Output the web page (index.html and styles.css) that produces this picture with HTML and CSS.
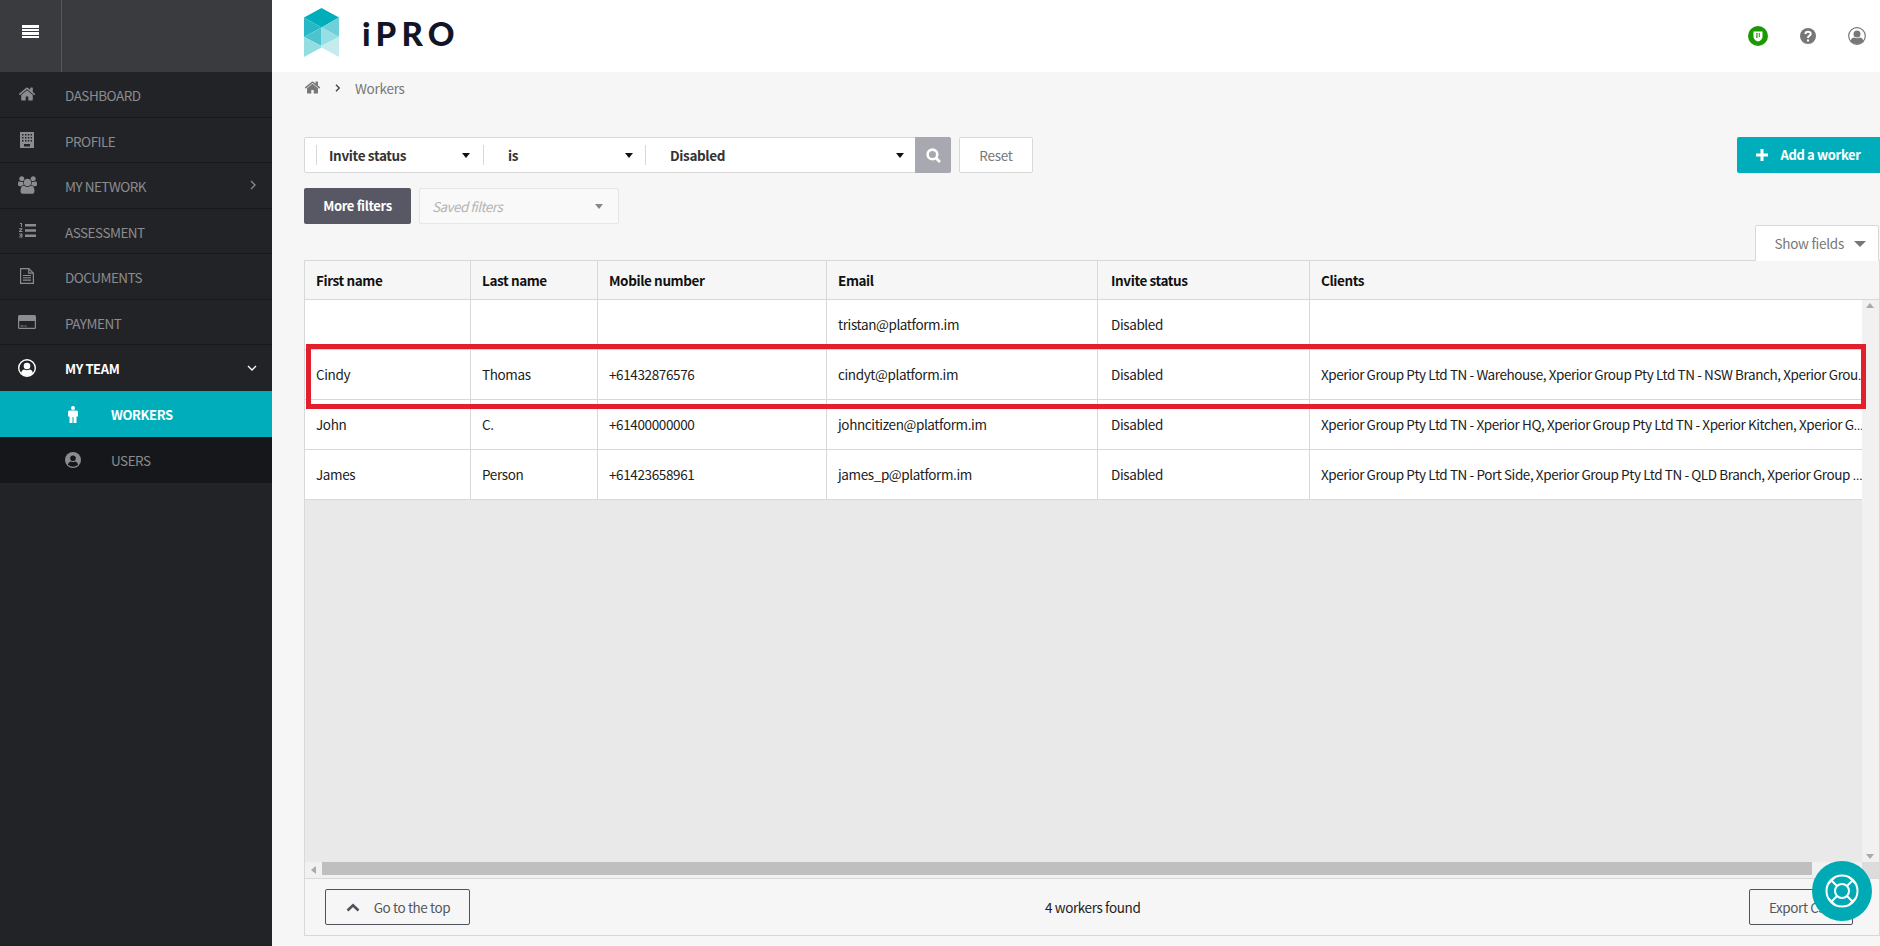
FILE: index.html
```html
<!DOCTYPE html>
<html lang="en">
<head>
<meta charset="utf-8">
<title>iPRO - Workers</title>
<link rel="stylesheet" href="styles.css">
</head>
<body>
<div class="app">
  <aside class="sidebar">
    <div class="side-head">
      <div class="burger"><span></span><span></span><span></span><span></span></div>
    </div>
    <nav class="nav">
      <a class="nav-item"><span class="nav-icon"><svg width="18" height="18" viewBox="0 0 1792 1792"><path fill="currentColor" d="M1472 992v480q0 26-19 45t-45 19h-384v-384h-256v384h-384q-26 0-45-19t-19-45v-480q0-1 .5-3t.5-3l575-474 575 474q1 2 1 6zm223-69l-62 74q-8 9-21 11h-3q-13 0-21-7l-692-577-692 577q-12 8-24 7-13-2-21-11l-62-74q-8-10-7-23.5t11-21.5l719-599q32-26 76-26t76 26l244 204v-195q0-14 9-23t23-9h192q14 0 23 9t9 23v408l219 182q10 8 11 21.5t-7 23.5z"/></svg></span><span class="nav-label">DASHBOARD</span></a>
      <a class="nav-item"><span class="nav-icon"><svg width="14" height="16" viewBox="0 0 14 16"><path fill="currentColor" fill-rule="evenodd" d="M0 0h14v16H0zM2 2v1.500h1.500V2zm3 0v1.500h1.500V2zm2.800 0v1.500h1.500V2zm2.800 0v1.500H12V2zM2 5v1.500h1.500V5zm3 0v1.500h1.500V5zm2.800 0v1.500h1.500V5zm2.800 0v1.500H12V5zM2 8v1.500h1.500V8zm3 0v1.500h1.500V8zm2.800 0v1.500h1.500V8zm2.800 0v1.500H12V8zM4 12v2.500h6V12z"/></svg></span><span class="nav-label">PROFILE</span></a>
      <a class="nav-item"><span class="nav-icon"><svg width="19" height="18" viewBox="0 0 1920 1792"><path fill="currentColor" d="M593 896q-162 5-265 128h-134q-82 0-138-40.500t-56-118.500q0-353 124-353 6 0 43.500 21t97.500 42.500 119 21.500q67 0 133-23-5 37-5 66 0 139 81 256zm1071 637q0 120-73 189.500t-194 69.500h-874q-121 0-194-69.500t-73-189.500q0-53 3.500-103.500t14-109 26.500-108.500 43-97.500 62-81 85.500-53.500 111.500-20q10 0 43 21.500t73 48 107 48 135 21.500 135-21.500 107-48 73-48 43-21.500q61 0 111.500 20t85.500 53.500 62 81 43 97.500 26.500 108.500 14 109 3.500 103.500zm-1024-1277q0 106-75 181t-181 75-181-75-75-181 75-181 181-75 181 75 75 181zm704 384q0 159-112.500 271.500t-271.500 112.500-271.500-112.500-112.500-271.500 112.500-271.500 271.500-112.500 271.500 112.500 112.500 271.500zm576 225q0 78-56 118.500t-138 40.500h-134q-103-123-265-128 81-117 81-256 0-29-5-66 66 23 133 23 59 0 119-21.500t97.500-42.500 43.500-21q124 0 124 353zm-128-609q0 106-75 181t-181 75-181-75-75-181 75-181 181-75 181 75 75 181z"/></svg></span><span class="nav-label">MY NETWORK</span><svg class="nav-caret" width="8" height="10" viewBox="0 0 8 10"><path d="M2 1l4 4-4 4" fill="none" stroke="currentColor" stroke-width="1.300"/></svg></a>
      <a class="nav-item"><span class="nav-icon"><svg width="17" height="15" viewBox="0 0 17 15"><path fill="currentColor" d="M6 1h11v2.500H6zM6 6.300h11v2.500H6zM6 11.500h11V14H6zM1 0h2v4H2V1H1zM0 5.300h3.500v1L1.500 8H3.500v1H0V8l2-1.700H0zM0 10.500h3.500v4H0v-1h2.500v-.5H1v-1h1.500v-.5H0z"/></svg></span><span class="nav-label">ASSESSMENT</span></a>
      <a class="nav-item"><span class="nav-icon"><svg width="14" height="16" viewBox="0 0 14 16"><path fill="none" stroke="currentColor" stroke-width="1.200" d="M.6.600h8.200l4.600 4.600v10.200H.6zM8.800.600v4.600h4.600"/><path stroke="currentColor" stroke-width="1.100" d="M3 7.500h8M3 9.800h8M3 12.100h8"/></svg></span><span class="nav-label">DOCUMENTS</span></a>
      <a class="nav-item"><span class="nav-icon"><svg width="18" height="14" viewBox="0 0 18 14"><path fill="currentColor" fill-rule="evenodd" d="M1.500 0h15A1.500 1.500 0 0 1 18 1.500v11a1.500 1.500 0 0 1-1.500 1.500h-15A1.500 1.500 0 0 1 0 12.500v-11A1.500 1.500 0 0 1 1.500 0zM1.200 6v6.500q0 .3.300.3h15q.3 0 .3-.3V6zM2.500 10.500h3v1h-3zM6.500 10.500h2v1h-2z"/></svg></span><span class="nav-label">PAYMENT</span></a>
      <a class="nav-item nav-open"><span class="nav-icon"><svg width="18" height="18" viewBox="0 0 18 18"><circle cx="9" cy="9" r="8.300" fill="none" stroke="currentColor" stroke-width="1.400"/><circle cx="9" cy="7" r="3.300" fill="currentColor"/><path fill="currentColor" d="M3 14.500q.5-3.500 3-4 3 1.600 6 0 2.500.5 3 4-6 5-12 0z"/></svg></span><span class="nav-label">MY TEAM</span><svg class="nav-caret" width="10" height="8" viewBox="0 0 10 8"><path d="M1 2l4 4 4-4" fill="none" stroke="currentColor" stroke-width="1.300"/></svg></a>
      <a class="sub-item sub-active"><span class="sub-icon"><svg width="10" height="17" viewBox="0 0 10 17"><circle cx="5" cy="2" r="2" fill="currentColor"/><path fill="currentColor" d="M1.500 4.500h7Q10 4.500 10 6v4.500H8.500V17h-3v-6h-1v6h-3v-6.500H0V6q0-1.500 1.500-1.500z"/></svg></span><span class="sub-label">WORKERS</span></a>
      <a class="sub-item"><span class="sub-icon"><svg width="16" height="16" viewBox="0 0 16 16"><circle cx="8" cy="8" r="8" fill="currentColor"/><circle cx="8" cy="6.300" r="2.800" fill="#16171a"/><path fill="#16171a" d="M2.800 12.700q.7-3 3-3.300 2.200 1.200 4.400 0 2.300.3 3 3.300-5.200 4-10.400 0z"/></svg></span><span class="sub-label">USERS</span></a>
    </nav>
  </aside>

  <main class="main">
    <header class="topbar">
      <div class="logo">
        <svg width="36" height="50" viewBox="0 0 36 50">
          <path fill="#00aebb" d="M17.500 0 35 9.500 17.500 19.500 0 9.500z"/>
          <path fill="#27b8c5" d="M0 9.500 17.500 19.500 0 29z"/>
          <path fill="#6ed1da" d="M35 9.500 17.500 19.500 35 29z"/>
          <path fill="#4cc4cf" d="M0 29 17.500 19.500V38z"/>
          <path fill="#96dfe5" d="M35 29 17.500 19.500V38z"/>
          <path fill="#93dde3" d="M0 29 17.500 38V39.500L0 49z"/>
          <path fill="#c4ecef" d="M35 29 17.500 38V39.500L35 49z"/>
        </svg>
        <span class="logo-text">iPRO</span>
      </div>
      <div class="top-icons">
        <svg width="20" height="20" viewBox="0 0 20 20"><circle cx="10" cy="10" r="10" fill="#1a9a00"/><path fill="#fff" d="M5.500 5.500h9v5q0 3.500-4.500 5-4.500-1.500-4.500-5z"/><path fill="#1a9a00" d="M8.300 7h1.200v5H8.300zM10.800 7h1v4h-1z"/></svg>
        <svg width="16" height="16" viewBox="0 0 16 16"><circle cx="8" cy="8" r="8" fill="#777"/><path fill="none" stroke="#fff" stroke-width="2" d="M5.300 6q.3-2.300 2.700-2.300t2.700 2q0 1.300-1.500 2.200-1.200.7-1.200 2"/><path fill="#fff" d="M7 11.500h2v2H7z"/></svg>
        <svg width="18" height="18" viewBox="0 0 18 18"><circle cx="9" cy="9" r="8.300" fill="none" stroke="#777" stroke-width="1.200"/><circle cx="9" cy="7" r="3.500" fill="#777"/><path fill="#777" d="M2.500 14.500q.5-3.500 3.300-4 3.200 1.600 6.400 0 2.800.5 3.300 4-6.500 5-13 0z"/></svg>
      </div>
    </header>

    <div class="content">
      <div class="crumbs">
        <svg class="crumb-home" width="17" height="17" viewBox="0 0 1792 1792"><path fill="currentColor" d="M1472 992v480q0 26-19 45t-45 19h-384v-384h-256v384h-384q-26 0-45-19t-19-45v-480q0-1 .5-3t.5-3l575-474 575 474q1 2 1 6zm223-69l-62 74q-8 9-21 11h-3q-13 0-21-7l-692-577-692 577q-12 8-24 7-13-2-21-11l-62-74q-8-10-7-23.500t11-21.500l719-599q32-26 76-26t76 26l244 204v-195q0-14 9-23t23-9h192q14 0 23 9t9 23v408l219 182q10 8 11 21.500t-7 23.500z"/></svg>
        <svg class="crumb-sep" width="6" height="8" viewBox="0 0 6 8"><path d="M1 .8 4.200 4 1 7.200" fill="none" stroke="#444" stroke-width="1.400"/></svg>
        <span>Workers</span>
      </div>

      <div class="filter-row">
        <div class="filter-left">
          <div class="filter-bar">
            <div class="filter-field f-a"><span>Invite status</span><i class="tri"></i></div>
            <div class="filter-field f-b"><span>is</span><i class="tri"></i></div>
            <div class="filter-field f-c"><span>Disabled</span><i class="tri"></i></div>
            <button class="search-btn"><svg width="15" height="15" viewBox="0 0 14 14"><circle cx="6" cy="6" r="4.500" fill="none" stroke="#fff" stroke-width="2.400"/><path d="M9.300 9.300 13 13" stroke="#fff" stroke-width="2.600"/></svg></button>
          </div>
          <button class="reset-btn">Reset</button>
        </div>
        <button class="add-btn"><svg width="12" height="12" viewBox="0 0 12 12"><path fill="#fff" d="M4.500 0h3v4.500H12v3H7.500V12h-3V7.500H0v-3h4.500z"/></svg>Add a worker</button>
      </div>

      <div class="filter-row2">
        <button class="more-btn">More filters</button>
        <div class="saved"><em>Saved filters</em><i class="tri tri-grey"></i></div>
      </div>

      <div class="fields-row">
        <button class="fields-btn"><span class="fields-label">Show fields</span><i class="tri tri-wide"></i></button>
      </div>

      <section class="table">
        <div class="row head">
          <div class="cell">First name</div>
          <div class="cell">Last name</div>
          <div class="cell">Mobile number</div>
          <div class="cell">Email</div>
          <div class="cell">Invite status</div>
          <div class="cell">Clients</div>
        </div>
        <div class="scroller">
          <div class="tbody">
            <div class="row">
              <div class="cell"></div><div class="cell"></div><div class="cell"></div>
              <div class="cell">tristan@platform.im</div><div class="cell">Disabled</div><div class="cell"></div>
            </div>
            <div class="row">
              <div class="cell">Cindy</div><div class="cell">Thomas</div><div class="cell">+61432876576</div>
              <div class="cell">cindyt@platform.im</div><div class="cell">Disabled</div>
              <div class="cell clip">Xperior Group Pty Ltd TN - Warehouse, Xperior Group Pty Ltd TN - NSW Branch, Xperior Grou<span class="ell">..</span></div>
            </div>
            <div class="row">
              <div class="cell">John</div><div class="cell">C.</div><div class="cell">+61400000000</div>
              <div class="cell">johncitizen@platform.im</div><div class="cell">Disabled</div>
              <div class="cell clip">Xperior Group Pty Ltd TN - Xperior HQ, Xperior Group Pty Ltd TN - Xperior Kitchen, Xperior G<span class="ell">...</span></div>
            </div>
            <div class="row">
              <div class="cell">James</div><div class="cell">Person</div><div class="cell">+61423658961</div>
              <div class="cell">james_p@platform.im</div><div class="cell">Disabled</div>
              <div class="cell clip">Xperior Group Pty Ltd TN - Port Side, Xperior Group Pty Ltd TN - QLD Branch, Xperior Group <span class="ell">...</span></div>
            </div>
          </div>
          <div class="vbar"><i class="arr arr-up"></i><i class="arr arr-down"></i></div>
          <div class="hbar"><i class="arr arr-left"></i><div class="thumb"></div></div>
          <div class="corner"></div>
          <div class="highlight"></div>
        </div>
        <footer class="tfoot">
          <button class="ghost top-btn"><svg width="14" height="9" viewBox="0 0 14 9"><path d="M1.500 7.500 7 2.200l5.500 5.300" fill="none" stroke="#50525c" stroke-width="2.600"/></svg>Go to the top</button>
          <span class="count">4 workers found</span>
          <button class="ghost export-btn">Export CSV</button>
        </footer>
      </section>
    </div>
  </main>
</div>
<button class="help"><svg width="38" height="38" viewBox="0 0 38 38" fill="none" stroke="#fff" stroke-width="2"><circle cx="19" cy="19" r="15.500"/><circle cx="19" cy="19" r="7"/><path d="M8 8l6 6M30 8l-6 6M8 30l6-6M30 30l-6-6M5 12l7 -7M26 5l7 7M5 26l7 7M33 26l-7 7"/></svg></button>
</body>
</html>
```
FILE: styles.css
```css
* { box-sizing: border-box; }
html, body { margin: 0; height: 946px; overflow: hidden; }
body {
  font-family: "Noto Sans CJK SC", "Noto Sans", sans-serif;
  font-size: 13.5px;
  letter-spacing: -0.25px;
  line-height: 20px;
  color: #1c1c22;
  background: #f6f6f6;
}
button { font: inherit; letter-spacing: inherit; cursor: pointer; padding: 0; }
.app { display: flex; height: 946px; }

.sidebar { width: 272px; flex: none; background: #222326; display: flex; flex-direction: column; }
.side-head { height: 72px; background: #3a3b3f; display: flex; align-items: center; }
.burger {
  width: 62px; height: 72px; border-right: 1px solid #56575b; padding-bottom: 9px;
  display: flex; flex-direction: column; justify-content: center; align-items: center; gap: 1px;
}
.burger span { display: block; width: 17px; height: 2.500px; background: #fff; }
.nav { display: flex; flex-direction: column; }
.nav-item {
  height: 45.500px; display: flex; align-items: center; color: #8b8c90;
  border-bottom: 1px solid #17181a; padding-right: 15px;
}
.nav-label { padding-top: 1.500px; letter-spacing: -0.5px; }
.nav-icon { width: 65px; flex: none; display: flex; justify-content: center; padding-right: 11px; }
.nav-caret { margin-left: auto; }
.nav-open { height: 46px; color: #fff; font-weight: 700; border-bottom: none; }
.nav-open .nav-label { font-size: 13px; letter-spacing: -0.4px; padding-top: 2px; }
.sub-item { height: 46px; display: flex; align-items: center; background: #16171a; color: #8b8c90; }
.sub-label { letter-spacing: -0.5px; }
.sub-active { background: #00aebb; color: #fff; font-weight: 700; }
.sub-active .sub-label { font-size: 13px; letter-spacing: -0.4px; padding-top: 2px; }
.sub-icon { width: 111px; flex: none; display: flex; justify-content: center; padding-left: 35px; }

.main { flex: 1; min-width: 0; display: flex; flex-direction: column; }
.topbar { height: 72px; flex: none; background: #fff; display: flex; align-items: center; justify-content: space-between; padding-left: 32px; }
.logo { display: flex; align-items: center; gap: 22px; padding-bottom: 6px; }
.logo-text {
  font-family: Lato, "Noto Sans", sans-serif; font-weight: 900; font-size: 33px; line-height: 40px;
  letter-spacing: 5.200px; color: #111527;
}
.top-icons { display: flex; align-items: center; gap: 32px; padding-right: 14px; }

.content { flex: 1; min-height: 0; display: flex; flex-direction: column; padding: 0 0 10px 32px; }
.crumbs { height: 65px; flex: none; display: flex; align-items: flex-start; padding-top: 6px; color: #777; }
.crumb-home { margin-top: 1px; margin-right: 14px; }
.crumb-sep { margin-top: 6px; margin-right: 14px; }

.filter-row { display: flex; justify-content: space-between; height: 36px; flex: none; }
.filter-left { display: flex; gap: 8px; }
.filter-bar { display: flex; width: 647px; height: 36px; background: #fff; border: 1px solid #d8d8d8; border-radius: 2px; align-items: center; font-weight: 700; letter-spacing: -0.35px; color: #333; }
.filter-field { height: 20px; display: flex; align-items: center; justify-content: space-between; border-left: 1px solid #d8d8d8; }
.f-a { margin-left: 11px; width: 167px; padding: 0 13px 0 12px; }
.f-b { width: 162px; padding: 0 12px 0 24px; }
.f-c { flex: 1; padding: 0 11px 0 24px; }
.tri { display: block; width: 0; height: 0; border-left: 4px solid transparent; border-right: 4px solid transparent; border-top: 5px solid #111; }
.tri-grey { border-top-color: #888; }
.tri-wide { border-left-width: 6px; border-right-width: 6px; border-top-width: 6px; border-top-color: #777; margin-left: 10px; }
.search-btn { width: 36px; height: 36px; margin: -1px -1px -1px 0; background: #a7a8b0; border: none; border-radius: 0 2px 2px 0; display: flex; align-items: center; justify-content: center; }
.reset-btn { width: 74px; background: #fff; border: 1px solid #d8d8d8; border-radius: 2px; color: #777; }
.add-btn { width: 143px; background: #00aebb; color: #fff; border: none; border-radius: 2px 0 0 2px; font-size: 13px; font-weight: 700; letter-spacing: -0.35px; display: flex; align-items: center; justify-content: center; gap: 12px; }

.filter-row2 { display: flex; gap: 8px; margin-top: 15px; height: 36px; flex: none; }
.more-btn { width: 107px; background: #575864; color: #fff; border: none; border-radius: 2px; font-size: 13px; font-weight: 700; letter-spacing: -0.35px; }
.saved { width: 200px; background: #f9f9f9; border: 1px solid #e6e6e6; border-radius: 2px; display: flex; align-items: center; justify-content: space-between; padding: 0 15px 0 12px; color: #b5b5b5; }
.saved em { font-style: italic; letter-spacing: -0.55px; }

.fields-row { display: flex; justify-content: flex-end; margin-top: 1px; padding-right: 1px; height: 36px; flex: none; margin-bottom: -1px; position: relative; }
.fields-btn { width: 124px; height: 36px; background: #fff; border: 1px solid #d8d8d8; border-bottom: none; border-radius: 2px 2px 0 0; color: #777; display: flex; align-items: center; justify-content: flex-end; padding-right: 12px; }
.fields-label { padding-bottom: 2px; }

.table { flex: 1; min-height: 0; display: flex; flex-direction: column; border: 1px solid #d8d8d8; }
.row { display: grid; grid-template-columns: 166px 127px 229px 271px 212px minmax(0, 1fr); height: 50px; background: #fff; border-bottom: 1px solid #d8d8d8; letter-spacing: -0.38px; }
.row.head { height: 39px; flex: none; background: #f6f6f6; font-weight: 700; letter-spacing: -0.4px; }
.cell { display: flex; align-items: center; padding: 0 0 1px 11px; border-right: 1px solid #d8d8d8; color: #1c1c22; }
.cell:nth-child(5) { padding-left: 13px; }
.head .cell { color: #111; padding-bottom: 0; }
.cell:last-child { border-right: none; }
.clip { display: block; line-height: 49px; white-space: nowrap; overflow: hidden; letter-spacing: -0.42px; }
.ell { font-family: "Liberation Sans", sans-serif; letter-spacing: -0.5px; }

.scroller { flex: 1; min-height: 0; position: relative; display: grid; grid-template-columns: minmax(0, 1fr) 17px; grid-template-rows: minmax(0, 1fr) 16px; background: #e9e9e9; }
.tbody { background: #e9e9e9; }
.vbar { background: #f1f1f1; position: relative; }
.hbar { background: #f1f1f1; display: flex; align-items: stretch; padding-left: 17px; position: relative; padding-bottom: 3px; }
.thumb { width: 1490px; background: #bfbfbf; }
.corner { background: #dcdcdc; }
.arr { position: absolute; width: 0; height: 0; border: 4px solid transparent; }
.arr-up { top: 3px; left: 4px; border-bottom: 5px solid #aaa; border-top: none; }
.arr-down { bottom: 3px; left: 4px; border-top: 5px solid #aaa; border-bottom: none; }
.arr-left { left: 6px; top: 4px; border-right: 5px solid #aaa; border-left: none; }
.highlight { position: absolute; left: 1px; top: 44px; width: 1560px; height: 65px; border: 5px solid #e21f2d; pointer-events: none; }

.tfoot { height: 57px; flex: none; border-top: 1px solid #d8d8d8; background: #f6f6f6; display: flex; align-items: center; justify-content: space-between; padding: 0 26px 0 20px; position: relative; }
.ghost { height: 36px; background: transparent; border: 1px solid #50525c; border-radius: 2px; color: #55565e; display: flex; align-items: center; justify-content: center; letter-spacing: -0.4px; }
.top-btn { width: 145px; gap: 14px; padding-left: 1px; }
.export-btn { width: 104px; }
.count { color: #1c1c22; position: absolute; left: 740px; letter-spacing: -0.38px; }

.help { position: absolute; left: 1812px; top: 861px; width: 60px; height: 60px; border-radius: 50%; border: none; background: #00aab5; display: flex; align-items: center; justify-content: center; }
```
